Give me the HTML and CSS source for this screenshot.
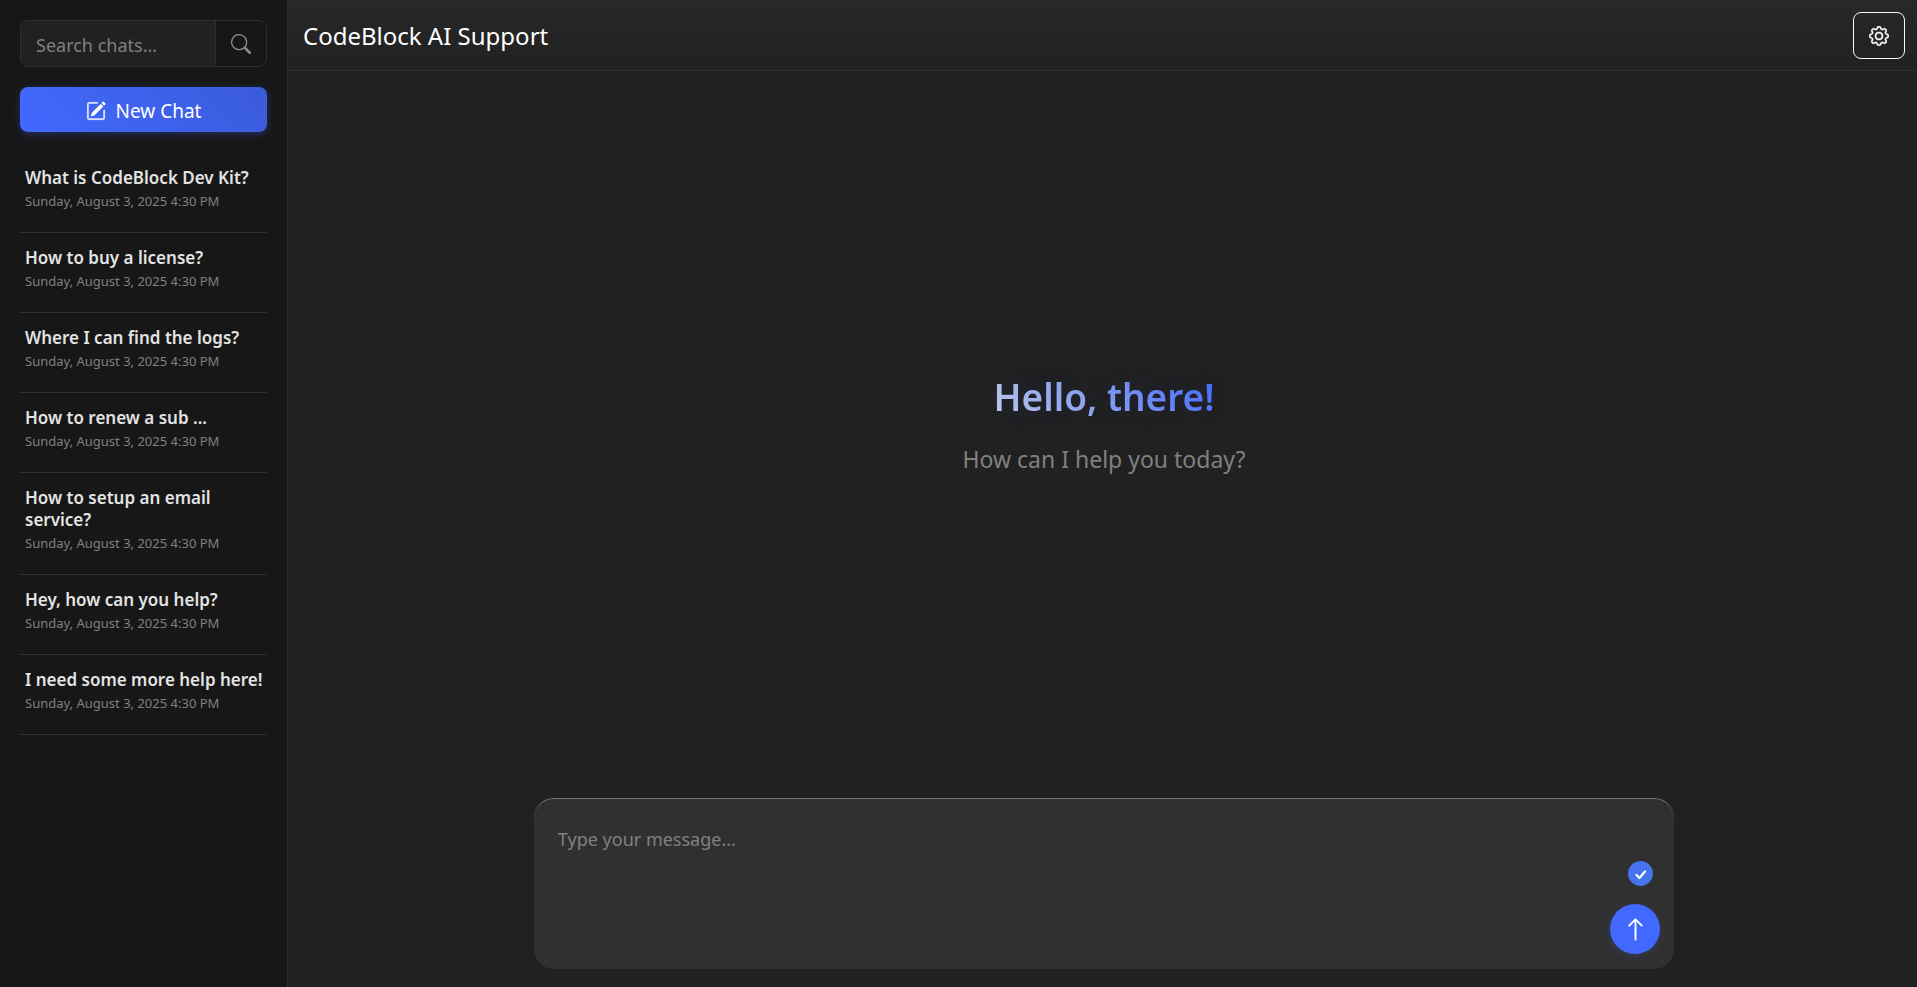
FILE: index.html
```html
<!DOCTYPE html>
<html lang="en">
<head>
<meta charset="utf-8">
<meta name="viewport" content="width=device-width, initial-scale=1">
<title>CodeBlock AI Support</title>
<link rel="stylesheet" href="styles.css">
</head>
<body>
<div class="app">
  <aside class="sidebar">
    <form class="search">
      <input class="search-input" type="text" placeholder="Search chats..." aria-label="Search chats">
      <button class="search-button" type="button" aria-label="Search">
        <svg width="20" height="20" viewBox="0 0 16 16" fill="currentColor" aria-hidden="true"><path d="M11.742 10.344a6.500 6.500 0 1 0-1.397 1.398h-.001q.044.060.098.115l3.850 3.850a1 1 0 0 0 1.415-1.414l-3.850-3.850a1 1 0 0 0-.115-.100zM12 6.500a5.500 5.500 0 1 1-11 0 5.500 5.500 0 0 1 11 0"/></svg>
      </button>
    </form>
    <button class="new-chat" type="button">
      <svg width="20" height="20" viewBox="0 0 16 16" fill="currentColor" stroke="currentColor" stroke-width=".2" aria-hidden="true"><path d="M15.502 1.940a.5.5 0 0 1 0 .706L14.459 3.690l-2-2L13.502.646a.5.5 0 0 1 .707 0l1.293 1.293zm-1.750 2.456-2-2L4.939 9.210a.5.5 0 0 0-.121.196l-.805 2.414a.25.25 0 0 0 .316.316l2.414-.805a.5.5 0 0 0 .196-.120l6.813-6.814z"/><path fill-rule="evenodd" d="M1 13.500A1.500 1.500 0 0 0 2.500 15h11a1.500 1.500 0 0 0 1.500-1.500v-6a.5.5 0 0 0-1 0v6a.5.5 0 0 1-.5.5h-11a.5.5 0 0 1-.5-.5v-11a.5.5 0 0 1 .5-.5H9a.5.5 0 0 0 0-1H2.500A1.500 1.500 0 0 0 1 2.500z"/></svg>
      <span>New Chat</span>
    </button>
    <nav class="chats" aria-label="Chats">
      <a class="chat" href="#"><span class="chat-title">What is CodeBlock Dev Kit?</span><span class="chat-date">Sunday, August 3, 2025 4:30 PM</span></a>
      <a class="chat" href="#"><span class="chat-title">How to buy a license?</span><span class="chat-date">Sunday, August 3, 2025 4:30 PM</span></a>
      <a class="chat" href="#"><span class="chat-title">Where I can find the logs?</span><span class="chat-date">Sunday, August 3, 2025 4:30 PM</span></a>
      <a class="chat" href="#"><span class="chat-title">How to renew a sub ...</span><span class="chat-date">Sunday, August 3, 2025 4:30 PM</span></a>
      <a class="chat" href="#"><span class="chat-title">How to setup an email service?</span><span class="chat-date">Sunday, August 3, 2025 4:30 PM</span></a>
      <a class="chat" href="#"><span class="chat-title">Hey, how can you help?</span><span class="chat-date">Sunday, August 3, 2025 4:30 PM</span></a>
      <a class="chat" href="#"><span class="chat-title">I need some more help here!</span><span class="chat-date">Sunday, August 3, 2025 4:30 PM</span></a>
    </nav>
  </aside>
  <main class="main">
    <header class="topbar">
      <h1 class="brand">CodeBlock AI Support</h1>
      <button class="settings" type="button" aria-label="Settings">
        <svg width="20" height="20" viewBox="0 0 16 16" fill="currentColor" stroke="currentColor" stroke-width=".4" aria-hidden="true"><path d="M8 4.754a3.246 3.246 0 1 0 0 6.492 3.246 3.246 0 0 0 0-6.492M5.754 8a2.246 2.246 0 1 1 4.492 0 2.246 2.246 0 0 1-4.492 0"/><path d="M9.796 1.343c-.527-1.790-3.065-1.790-3.592 0l-.094.319a.873.873 0 0 1-1.255.520l-.292-.160c-1.640-.892-3.433.902-2.540 2.541l.159.292a.873.873 0 0 1-.520 1.255l-.319.094c-1.790.527-1.790 3.065 0 3.592l.319.094a.873.873 0 0 1 .520 1.255l-.160.292c-.892 1.640.901 3.434 2.541 2.540l.292-.159a.873.873 0 0 1 1.255.520l.094.319c.527 1.790 3.065 1.790 3.592 0l.094-.319a.873.873 0 0 1 1.255-.520l.292.160c1.640.893 3.434-.902 2.540-2.541l-.159-.292a.873.873 0 0 1 .520-1.255l.319-.094c1.790-.527 1.790-3.065 0-3.592l-.319-.094a.873.873 0 0 1-.520-1.255l.160-.292c.893-1.640-.902-3.433-2.541-2.540l-.292.159a.873.873 0 0 1-1.255-.520zm-2.633.283c.246-.835 1.428-.835 1.674 0l.094.319a1.873 1.873 0 0 0 2.693 1.115l.291-.160c.764-.415 1.600.420 1.184 1.185l-.159.292a1.873 1.873 0 0 0 1.116 2.692l.318.094c.835.246.835 1.428 0 1.674l-.319.094a1.873 1.873 0 0 0-1.115 2.693l.160.291c.415.764-.420 1.600-1.185 1.184l-.291-.159a1.873 1.873 0 0 0-2.693 1.116l-.094.318c-.246.835-1.428.835-1.674 0l-.094-.319a1.873 1.873 0 0 0-2.692-1.115l-.292.160c-.764.415-1.600-.420-1.184-1.185l.159-.291A1.873 1.873 0 0 0 1.945 8.930l-.319-.094c-.835-.246-.835-1.428 0-1.674l.319-.094A1.873 1.873 0 0 0 3.060 4.377l-.160-.292c-.415-.764.420-1.600 1.185-1.184l.292.159a1.873 1.873 0 0 0 2.692-1.115z"/></svg>
      </button>
    </header>
    <section class="welcome">
      <h2 class="greeting">Hello, there!</h2>
      <p class="prompt">How can I help you today?</p>
    </section>
    <form class="composer">
      <textarea class="message" placeholder="Type your message..." aria-label="Message"></textarea>
      <div class="actions">
        <button class="check" type="button" aria-label="Check writing">
          <svg width="25" height="25" viewBox="0 0 25 25" fill="none" stroke="currentColor" stroke-width="2.2" stroke-linecap="round" stroke-linejoin="round" aria-hidden="true"><path d="M8.500 14 11.500 17 17 10.500"/></svg>
        </button>
        <button class="send" type="button" aria-label="Send">
          <svg width="25" height="25" viewBox="0 0 16 16" fill="currentColor" stroke="currentColor" stroke-width=".2" aria-hidden="true"><path fill-rule="evenodd" d="M8 15a.5.5 0 0 0 .5-.5V2.707l3.146 3.147a.5.5 0 0 0 .708-.708l-4-4a.5.5 0 0 0-.708 0l-4 4a.5.5 0 1 0 .708.708L7.500 2.707V14.500a.5.5 0 0 0 .5.5"/></svg>
        </button>
      </div>
    </form>
  </main>
</div>
</body>
</html>
```
FILE: styles.css
```css
* {
  box-sizing: border-box;
}

body {
  margin: 0;
  background: #212121;
  color: #fff;
  font-family: "Segoe UI", "Noto Sans", "Open Sans", sans-serif;
  font-size: 19px;
  line-height: 28px;
}

button,
input,
textarea {
  margin: 0;
  font: inherit;
  color: inherit;
}

button {
  display: flex;
  align-items: center;
  justify-content: center;
  cursor: pointer;
}

.app {
  display: grid;
  grid-template-columns: 288px minmax(0, 1fr);
  min-height: 100vh;
}

/* Sidebar */
.sidebar {
  padding: 20px;
  background: #171717;
  border-right: 1px solid #2f2f2f;
}

.search {
  display: flex;
  height: 47px;
  margin-bottom: 20px;
  border: 1px solid #2f2f2f;
  border-radius: 8px;
  overflow: hidden;
}

.search-input {
  flex: 1;
  min-width: 0;
  padding: 2px 15px 0;
  border: 0;
  background: #212121;
  font-size: 18px;
  outline: 0;
}

.search-input::placeholder,
.message::placeholder {
  color: #808080;
  opacity: 1;
}

.search-button {
  width: 51px;
  padding: 0;
  border: 0;
  border-left: 1px solid #2f2f2f;
  background: #171717;
  color: #8e8e8e;
}

.new-chat {
  gap: 10px;
  width: 100%;
  height: 45px;
  padding: 2px 0 0;
  border: 0;
  border-radius: 8px;
  background: linear-gradient(45deg, #4169ff, #3a5bd9);
  box-shadow: 0 2px 8px rgba(65, 105, 255, 0.3);
}

.chats {
  display: flex;
  flex-direction: column;
  margin-top: 21px;
}

.chat {
  display: flex;
  flex-direction: column;
  padding: 14px 0 18px 5px;
  border-bottom: 1px solid #2f2f2f;
  color: #e3e3e3;
  text-decoration: none;
}

.chat-title {
  font-size: 17px;
  font-weight: 600;
  line-height: 22px;
}

.chat-date {
  color: #808080;
  font-size: 13px;
  line-height: 25px;
}

/* Main column */
.main {
  display: flex;
  flex-direction: column;
}

.topbar {
  display: flex;
  align-items: center;
  justify-content: space-between;
  height: 71px;
  padding: 1px 12px 0 15px;
  border-bottom: 1px solid #2f2f2f;
  background: linear-gradient(#282828, #212121);
}

.brand {
  margin: 0;
  font-size: 24px;
  font-weight: 400;
}

.settings {
  width: 52px;
  height: 47px;
  padding: 0;
  border: 1px solid #f8f9fa;
  border-radius: 8px;
  background: transparent;
}

.welcome {
  flex: 1;
  display: flex;
  flex-direction: column;
  align-items: center;
  justify-content: center;
  gap: 13px;
  padding: 0 0 24px 3px;
}

.greeting {
  margin: 0;
  background: linear-gradient(45deg, #c8cfe4, #4169ff);
  background-clip: text;
  -webkit-background-clip: text;
  color: transparent;
  font-size: 37px;
  font-weight: 600;
  line-height: 60px;
  text-shadow: 0 0 30px rgba(65, 105, 255, 0.15);
}

.prompt {
  margin: 0;
  color: #808080;
  font-size: 23px;
  line-height: 38px;
}

.composer {
  display: flex;
  align-self: center;
  width: 70%;
  height: 171px;
  margin: 0 0 18px 3px;
  padding: 0 14px 15px 0;
  border-top: 1px solid #6c757d;
  border-radius: 20px;
  background: #303030;
}

.message {
  flex: 1;
  padding: 26px 24px 0;
  border: 0;
  background: transparent;
  font-size: 18px;
  outline: 0;
  resize: none;
}

.actions {
  display: flex;
  flex-direction: column;
  align-items: center;
  justify-content: flex-end;
  gap: 18px;
}

.check {
  width: 25px;
  height: 25px;
  margin-left: 11px;
  padding: 0;
  border: 0;
  border-radius: 50%;
  background: #4674ee;
}

.send {
  width: 50px;
  height: 50px;
  padding: 0;
  border: 0;
  border-radius: 50%;
  background: #4169ff;
  box-shadow: 0 2px 8px rgba(65, 105, 255, 0.2);
}
```
